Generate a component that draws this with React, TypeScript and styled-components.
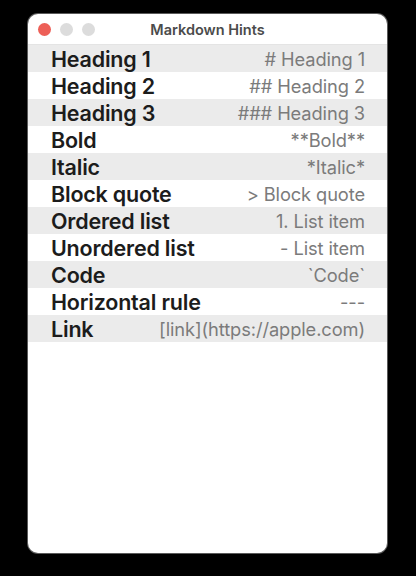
import React from 'react'
import styled, { createGlobalStyle } from 'styled-components'

const GlobalStyle = createGlobalStyle`
  html, body {
    margin: 0;
    padding: 0;
    background: #000;
  }
  body {
    font-family: Inter, "Noto Sans", "Liberation Sans", sans-serif;
  }
`

const Screen = styled.div`
  width: 416px;
  height: 576px;
  padding: 14px 0 0 28px;
  box-sizing: border-box;
`

const Window = styled.div`
  width: 359px;
  height: 539px;
  background: #fff;
  border-radius: 10px;
  overflow: hidden;
  box-shadow: 0 0 0 1px #5a5a5a;
  display: flex;
  flex-direction: column;
`

const TitleBar = styled.div`
  position: relative;
  height: 31px;
  flex-shrink: 0;
  display: flex;
  align-items: center;
  justify-content: center;
  border-bottom: 1px solid #e4e4e4;
  box-sizing: border-box;
`

const Lights = styled.div`
  position: absolute;
  left: 10px;
  top: 9px;
  display: flex;
  gap: 9px;
`

const Light = styled.span<{ $color: string }>`
  width: 13px;
  height: 13px;
  border-radius: 50%;
  background: ${(p) => p.$color};
`

const Title = styled.div`
  font-size: 14.5px;
  font-weight: 600;
  color: #4b4b4b;
`

const List = styled.div`
  display: flex;
  flex-direction: column;
`

const Row = styled.div<{ $shaded: boolean }>`
  height: 27px;
  display: flex;
  align-items: center;
  justify-content: space-between;
  padding: 0 22px 0 23px;
  background: ${(p) => (p.$shaded ? '#ebebeb' : '#fff')};
`

const Label = styled.span`
  font-size: 21.5px;
  font-weight: 600;
  color: #1c1c1c;
  letter-spacing: -0.2px;
`

const Syntax = styled.span`
  font-size: 18.3px;
  color: #7b7b7b;
  letter-spacing: -0.1px;
`

const hints: [string, string][] = [
  ['Heading 1', '# Heading 1'],
  ['Heading 2', '## Heading 2'],
  ['Heading 3', '### Heading 3'],
  ['Bold', '**Bold**'],
  ['Italic', '*Italic*'],
  ['Block quote', '> Block quote'],
  ['Ordered list', '1. List item'],
  ['Unordered list', '- List item'],
  ['Code', '`Code`'],
  ['Horizontal rule', '---'],
  ['Link', '[link](https://apple.com)']
]

const App = () => {
  return (
    <>
      <GlobalStyle />
      <Screen>
        <Window>
          <TitleBar>
            <Lights>
              <Light $color='#ed5f57' />
              <Light $color='#dcdcdc' />
              <Light $color='#dcdcdc' />
            </Lights>
            <Title>Markdown Hints</Title>
          </TitleBar>
          <List>
            {hints.map(([label, syntax], i) => (
              <Row key={label} $shaded={i % 2 === 0}>
                <Label>{label}</Label>
                <Syntax>{syntax}</Syntax>
              </Row>
            ))}
          </List>
        </Window>
      </Screen>
    </>
  )
}

export default App
